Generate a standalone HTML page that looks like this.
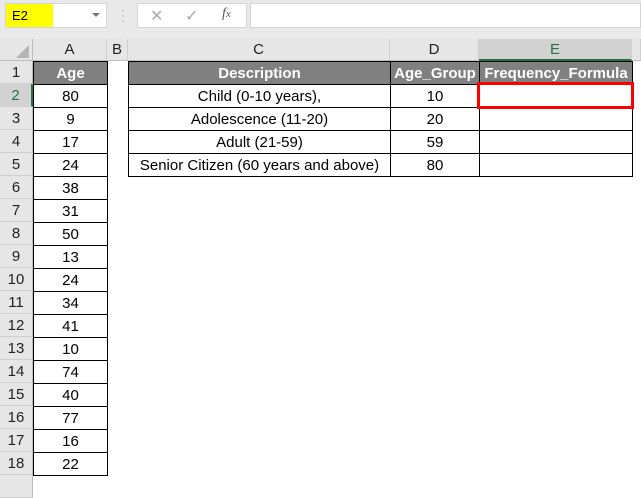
<!DOCTYPE html>
<html><head><meta charset="utf-8"><style>
*{margin:0;padding:0;box-sizing:border-box}
body{width:641px;height:480px;overflow:hidden;background:#fff;font-family:"Liberation Sans",Arial,sans-serif;position:relative}
.a{position:absolute}
.rh{position:absolute;left:0;width:33px;height:23px;background:#e6e6e6;border-bottom:1px solid #cfcfcf;border-right:1px solid #bdbdbd;text-align:center;font-size:15px;line-height:23px;color:#222}
.ch{position:absolute;top:39px;height:22px;background:#e6e6e6;border-right:1px solid #cfcfcf;border-bottom:1px solid #bdbdbd;text-align:center;font-size:15px;line-height:22px;color:#222}
.c{position:absolute;height:24px;border:1px solid #000;text-align:center;font-size:15px;line-height:23px;color:#000;white-space:nowrap;overflow:hidden}
.h{background:#808080;color:#fff;font-weight:bold;border-color:#000}
</style></head><body>
<div class="a" style="left:0;top:0;width:641px;height:39px;background:#e9e9e9"></div>
<div class="a" style="left:5px;top:3px;width:102px;height:25px;background:#fff;border:1px solid #d4d4d4"></div>
<div class="a" style="left:6px;top:4px;width:47px;height:23px;background:#ffff00;font-size:13px;line-height:23px;padding-left:6px">E2</div>
<div class="a" style="left:92px;top:13px;width:0;height:0;border-left:4px solid transparent;border-right:4px solid transparent;border-top:4px solid #777"></div>
<div class="a" style="left:121px;top:8px;color:#aaa;font-size:12px;line-height:5px">·<br>·<br>·</div>
<div class="a" style="left:137px;top:3px;width:110px;height:25px;background:#fff;border:1px solid #d4d4d4"></div>
<div class="a" style="left:150px;top:6px;color:#aaa;font-size:16px">✕</div>
<div class="a" style="left:185px;top:6px;color:#aaa;font-size:16px">✓</div>
<div class="a" style="left:222px;top:6px;color:#555;font-size:14px;font-style:italic;font-family:'Liberation Serif',serif">f<span style="font-size:11px">x</span></div>
<div class="a" style="left:250px;top:3px;width:391px;height:25px;background:#fff;border:1px solid #d4d4d4"></div>
<div class="a" style="left:0;top:39px;width:641px;height:22px;background:#e6e6e6"></div>
<div class="a" style="left:0;top:39px;width:33px;height:22px;border-right:1px solid #bdbdbd;border-bottom:1px solid #bdbdbd"></div>
<div class="a" style="left:16px;top:45px;width:0;height:0;border-left:13px solid transparent;border-bottom:13px solid #b5b5b5"></div>
<div class="ch" style="left:33px;width:74px">A</div>
<div class="ch" style="left:107px;width:21px">B</div>
<div class="ch" style="left:128px;width:262px">C</div>
<div class="ch" style="left:390px;width:89px">D</div>
<div class="ch" style="left:479px;width:153px;background:#d2d2d2;color:#217346;border-bottom:2px solid #217346">E</div>
<div class="ch" style="left:632px;width:9px"></div>
<div class="rh" style="top:61px">1</div><div class="rh" style="top:84px;background:#d2d2d2;color:#217346;border-right:2px solid #217346">2</div>
<div class="rh" style="top:107px">3</div><div class="rh" style="top:130px">4</div><div class="rh" style="top:153px">5</div><div class="rh" style="top:176px">6</div><div class="rh" style="top:199px">7</div><div class="rh" style="top:222px">8</div><div class="rh" style="top:245px">9</div><div class="rh" style="top:268px">10</div><div class="rh" style="top:291px">11</div><div class="rh" style="top:314px">12</div><div class="rh" style="top:337px">13</div><div class="rh" style="top:360px">14</div><div class="rh" style="top:383px">15</div><div class="rh" style="top:406px">16</div><div class="rh" style="top:429px">17</div><div class="rh" style="top:452px">18</div><div class="rh" style="top:475px"></div>
<div class="c h" style="left:33px;top:61px;width:75px">Age</div>
<div class="c" style="left:33px;top:84px;width:75px">80</div>
<div class="c" style="left:33px;top:107px;width:75px">9</div>
<div class="c" style="left:33px;top:130px;width:75px">17</div>
<div class="c" style="left:33px;top:153px;width:75px">24</div>
<div class="c" style="left:33px;top:176px;width:75px">38</div>
<div class="c" style="left:33px;top:199px;width:75px">31</div>
<div class="c" style="left:33px;top:222px;width:75px">50</div>
<div class="c" style="left:33px;top:245px;width:75px">13</div>
<div class="c" style="left:33px;top:268px;width:75px">24</div>
<div class="c" style="left:33px;top:291px;width:75px">34</div>
<div class="c" style="left:33px;top:314px;width:75px">41</div>
<div class="c" style="left:33px;top:337px;width:75px">10</div>
<div class="c" style="left:33px;top:360px;width:75px">74</div>
<div class="c" style="left:33px;top:383px;width:75px">40</div>
<div class="c" style="left:33px;top:406px;width:75px">77</div>
<div class="c" style="left:33px;top:429px;width:75px">16</div>
<div class="c" style="left:33px;top:452px;width:75px">22</div>
<div class="c h" style="left:128px;top:61px;width:263px">Description</div>
<div class="c h" style="left:390px;top:61px;width:90px">Age_Group</div>
<div class="c h" style="left:479px;top:61px;width:154px">Frequency_Formula</div>
<div class="c" style="left:128px;top:84px;width:263px">Child (0-10 years),</div>
<div class="c" style="left:390px;top:84px;width:90px">10</div>
<div class="c" style="left:479px;top:84px;width:154px"></div>
<div class="c" style="left:128px;top:107px;width:263px">Adolescence (11-20)</div>
<div class="c" style="left:390px;top:107px;width:90px">20</div>
<div class="c" style="left:479px;top:107px;width:154px"></div>
<div class="c" style="left:128px;top:130px;width:263px">Adult (21-59)</div>
<div class="c" style="left:390px;top:130px;width:90px">59</div>
<div class="c" style="left:479px;top:130px;width:154px"></div>
<div class="c" style="left:128px;top:153px;width:263px">Senior Citizen (60 years and above)</div>
<div class="c" style="left:390px;top:153px;width:90px">80</div>
<div class="c" style="left:479px;top:153px;width:154px"></div>
<div class="a" style="left:477px;top:82px;width:157px;height:27px;border:3px solid #ff0000"></div>
</body></html>
